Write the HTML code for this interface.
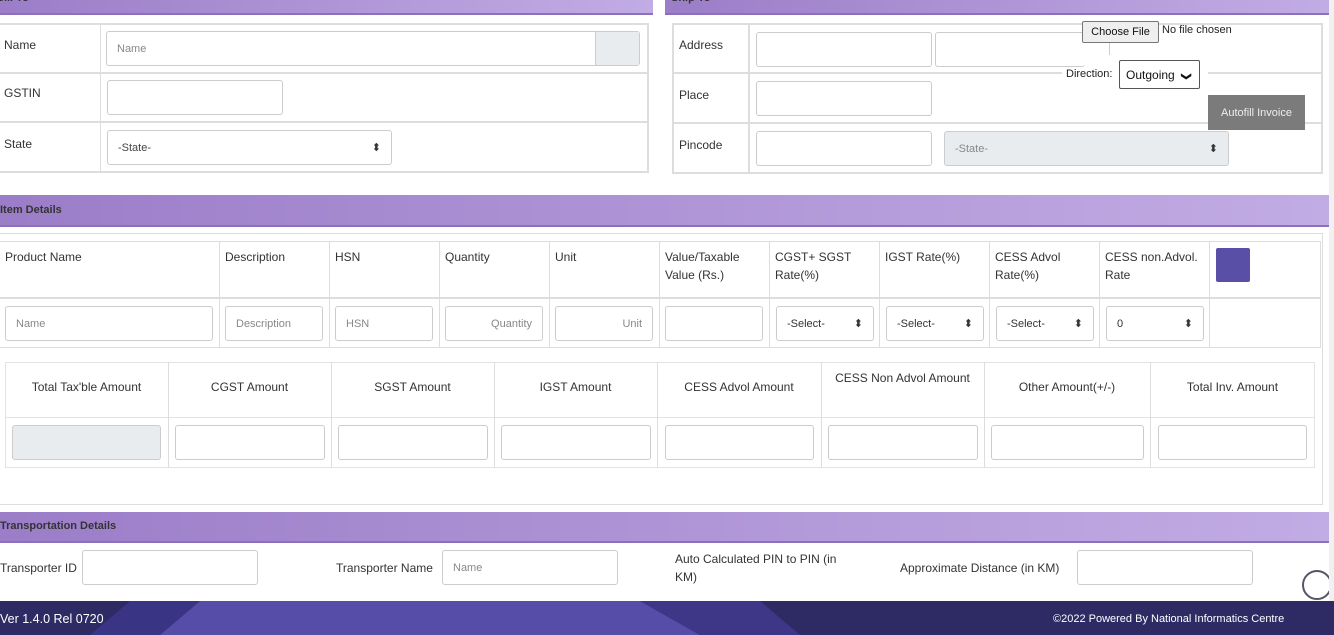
<!DOCTYPE html><html><head><style>
*{box-sizing:border-box;margin:0;padding:0}
body{width:1334px;height:635px;position:relative;overflow:hidden;background:#fff;font-family:"Liberation Sans",sans-serif;font-size:12px;color:#333}
.a{position:absolute}
.bar{position:absolute;background:linear-gradient(90deg,#9b7dc8,#c2ace4);border-bottom:2px solid #8d70bd;font-weight:bold;font-size:11px;color:#333;padding-left:0;overflow:hidden}
.in{position:absolute;border:1px solid #ccc;border-radius:3px;background:#fff;font-size:11px;color:#888;padding:0 10px;display:flex;align-items:center}
.sel:after{content:"\2B0D";position:absolute;right:10px;font-size:11px;color:#333}
.hl{position:absolute;background:#ddd;height:2px}
.vl{position:absolute;background:#ddd;width:1px}
.t{position:absolute;font-size:12px;color:#333;line-height:18px}
</style></head><body>
<div class="bar" style="left:0;top:-2px;width:653px;height:17px"><span style="position:absolute;left:-4px;top:-6px">Bill To</span></div>
<div class="bar" style="left:665px;top:-2px;width:664px;height:17px"><span style="position:absolute;left:6px;top:-6px">Ship To</span></div>
<!-- bill to -->
<div class="a" style="left:0;top:23px;width:649px;height:150px;border:2px solid #ddd;border-left:none"></div>
<div class="hl" style="left:0;top:72px;width:648px"></div><div class="hl" style="left:0;top:121px;width:648px"></div>
<div class="vl" style="left:100px;top:23px;height:150px"></div>
<div class="t" style="left:4px;top:36px">Name</div><div class="t" style="left:4px;top:84px">GSTIN</div><div class="t" style="left:4px;top:135px">State</div>
<div class="in" style="left:106px;top:31px;width:534px;height:35px">Name</div>
<div class="a" style="left:595px;top:32px;width:44px;height:33px;background:#e9ecef;border-left:1px solid #ccc"></div>
<div class="in" style="left:107px;top:80px;width:176px;height:35px"></div>
<div class="in sel" style="left:107px;top:130px;width:285px;height:35px;color:#444">-State-</div>
<!-- ship to -->
<div class="a" style="left:672px;top:23px;width:651px;height:151px;border:2px solid #ddd"></div>
<div class="hl" style="left:672px;top:72px;width:650px"></div><div class="hl" style="left:672px;top:122px;width:650px"></div>
<div class="vl" style="left:748px;top:23px;height:150px;width:2px"></div>
<div class="t" style="left:679px;top:36px">Address</div><div class="t" style="left:679px;top:86px">Place</div><div class="t" style="left:679px;top:136px">Pincode</div>
<div class="in" style="left:756px;top:32px;width:176px;height:35px"></div>
<div class="in" style="left:935px;top:32px;width:150px;height:35px;border-right:none"></div>
<div class="in" style="left:756px;top:81px;width:176px;height:35px"></div>
<div class="in" style="left:756px;top:131px;width:176px;height:35px"></div>
<div class="in sel" style="left:944px;top:131px;width:285px;height:35px;background:#e9ecef;color:#888">-State-</div>
<div class="a" style="left:1082px;top:21px;width:77px;height:22px;border:1px solid #777;border-radius:2px;background:#efefef;font-size:11px;color:#111;text-align:center;line-height:20px">Choose File</div>
<div class="a" style="left:1162px;top:24px;font-size:11px;color:#222">No file chosen</div>
<div class="a" style="left:1062px;top:72px;width:146px;height:4px;background:#fff"></div>
<div class="vl" style="left:1109px;top:43px;height:12px;background:#ccc"></div>
<div class="a" style="left:1066px;top:68px;font-size:11px;color:#222">Direction:</div>
<div class="a" style="left:1119px;top:60px;width:81px;height:29px;border:1px solid #555;border-radius:2px;background:#fff;font-size:12px;color:#111;padding:7px 0 0 6px">Outgoing <span style="font-size:10px;margin-left:4px;font-weight:bold;display:inline-block;transform:rotate(90deg)">&#10095;</span></div>
<div class="a" style="left:1208px;top:95px;width:97px;height:35px;background:#7b7b7b;color:#eee;font-size:11px;text-align:center;line-height:36px">Autofill Invoice</div>
<!-- item details -->
<div class="bar" style="left:0;top:195px;width:1329px;height:32px;padding-top:9px">Item Details</div>
<div class="a" style="left:0;top:233px;width:1323px;height:272px;border:1px solid #ddd;border-left:none"></div>
<div class="a" style="left:0;top:241px;width:1321px;height:107px;border:1px solid #ddd;border-left:none"></div>
<div class="hl" style="left:0;top:297px;width:1320px"></div>
<div class="vl" style="left:219px;top:241px;height:107px"></div><div class="vl" style="left:329px;top:241px;height:107px"></div><div class="vl" style="left:439px;top:241px;height:107px"></div><div class="vl" style="left:549px;top:241px;height:107px"></div><div class="vl" style="left:659px;top:241px;height:107px"></div><div class="vl" style="left:769px;top:241px;height:107px"></div><div class="vl" style="left:879px;top:241px;height:107px"></div><div class="vl" style="left:989px;top:241px;height:107px"></div><div class="vl" style="left:1099px;top:241px;height:107px"></div><div class="vl" style="left:1209px;top:241px;height:107px"></div>
<div class="t" style="left:5px;top:248px">Product Name</div><div class="t" style="left:225px;top:248px">Description</div><div class="t" style="left:335px;top:248px">HSN</div><div class="t" style="left:445px;top:248px">Quantity</div><div class="t" style="left:555px;top:248px">Unit</div><div class="t" style="left:665px;top:248px">Value/Taxable<br>Value (Rs.)</div><div class="t" style="left:775px;top:248px">CGST+ SGST<br>Rate(%)</div><div class="t" style="left:885px;top:248px">IGST Rate(%)</div><div class="t" style="left:995px;top:248px">CESS Advol<br>Rate(%)</div><div class="t" style="left:1105px;top:248px">CESS non.Advol.<br>Rate</div>
<div class="a" style="left:1216px;top:248px;width:34px;height:34px;background:#5a4fa6;border-radius:2px"></div>
<div class="in" style="left:5px;top:306px;width:208px;height:35px">Name</div>
<div class="in" style="left:225px;top:306px;width:98px;height:35px">Description</div>
<div class="in" style="left:335px;top:306px;width:98px;height:35px">HSN</div>
<div class="in" style="left:445px;top:306px;width:98px;height:35px;justify-content:flex-end">Quantity</div>
<div class="in" style="left:555px;top:306px;width:98px;height:35px;justify-content:flex-end">Unit</div>
<div class="in" style="left:665px;top:306px;width:98px;height:35px"></div>
<div class="in sel" style="left:776px;top:306px;width:98px;height:35px;color:#333">-Select-</div>
<div class="in sel" style="left:886px;top:306px;width:98px;height:35px;color:#333">-Select-</div>
<div class="in sel" style="left:996px;top:306px;width:98px;height:35px;color:#333">-Select-</div>
<div class="in sel" style="left:1106px;top:306px;width:98px;height:35px;color:#333">0</div>
<!-- totals -->
<div class="a" style="left:5px;top:362px;width:1310px;height:106px;border:1px solid #e3e3e3"></div>
<div class="hl" style="left:5px;top:417px;width:1310px;height:1px;background:#e3e3e3"></div>
<div class="vl" style="left:168px;top:362px;height:106px"></div><div class="vl" style="left:331px;top:362px;height:106px"></div><div class="vl" style="left:494px;top:362px;height:106px"></div><div class="vl" style="left:657px;top:362px;height:106px"></div><div class="vl" style="left:821px;top:362px;height:106px"></div><div class="vl" style="left:984px;top:362px;height:106px"></div><div class="vl" style="left:1150px;top:362px;height:106px"></div>
<div class="t" style="left:5px;top:378px;width:163px;text-align:center">Total Tax'ble Amount</div>
<div class="t" style="left:168px;top:378px;width:163px;text-align:center">CGST Amount</div>
<div class="t" style="left:331px;top:378px;width:163px;text-align:center">SGST Amount</div>
<div class="t" style="left:494px;top:378px;width:163px;text-align:center">IGST Amount</div>
<div class="t" style="left:657px;top:378px;width:164px;text-align:center">CESS Advol Amount</div>
<div class="t" style="left:821px;top:369px;width:163px;text-align:center">CESS Non Advol Amount</div>
<div class="t" style="left:984px;top:378px;width:166px;text-align:center">Other Amount(+/-)</div>
<div class="t" style="left:1150px;top:378px;width:165px;text-align:center">Total Inv. Amount</div>
<div class="in" style="left:12px;top:425px;width:149px;height:35px;background:#e9ecef"></div>
<div class="in" style="left:175px;top:425px;width:150px;height:35px"></div>
<div class="in" style="left:338px;top:425px;width:150px;height:35px"></div>
<div class="in" style="left:501px;top:425px;width:150px;height:35px"></div>
<div class="in" style="left:665px;top:425px;width:149px;height:35px"></div>
<div class="in" style="left:828px;top:425px;width:150px;height:35px"></div>
<div class="in" style="left:991px;top:425px;width:153px;height:35px"></div>
<div class="in" style="left:1158px;top:425px;width:149px;height:35px"></div>
<!-- transport -->
<div class="bar" style="left:0;top:512px;width:1329px;height:31px;padding-top:8px">Transportation Details</div>
<div class="t" style="left:0;top:559px">Transporter ID</div>
<div class="in" style="left:82px;top:550px;width:176px;height:35px"></div>
<div class="t" style="left:336px;top:559px">Transporter Name</div>
<div class="in" style="left:442px;top:550px;width:176px;height:35px">Name</div>
<div class="t" style="left:675px;top:550px">Auto Calculated PIN to PIN (in<br>KM)</div>
<div class="t" style="left:900px;top:559px">Approximate Distance (in KM)</div>
<div class="in" style="left:1077px;top:550px;width:176px;height:35px"></div>
<div class="a" style="left:1302px;top:570px;width:30px;height:30px;border:2px solid #556;border-radius:50%;background:#fff"></div>
<!-- footer -->
<div class="a" style="left:0;top:601px;width:1334px;height:34px;background:#2e2a63;overflow:hidden">
<svg width="1334" height="34" style="position:absolute;left:0;top:0"><polygon points="130,0 200,0 160,34 90,34" fill="#3a3485"/><polygon points="200,0 640,0 700,34 160,34" fill="#554da8"/><polygon points="640,0 760,0 800,34 700,34" fill="#3e3788"/></svg>
<div class="a" style="left:0;top:11px;color:#fff;font-size:12.5px">Ver 1.4.0 Rel 0720</div>
<div class="a" style="left:1053px;top:12px;color:#fff;font-size:11px">©2022 Powered By National Informatics Centre</div>
</div>
<div class="a" style="left:1329px;top:0;width:5px;height:601px;background:#f1f1f1"></div>
</body></html>
